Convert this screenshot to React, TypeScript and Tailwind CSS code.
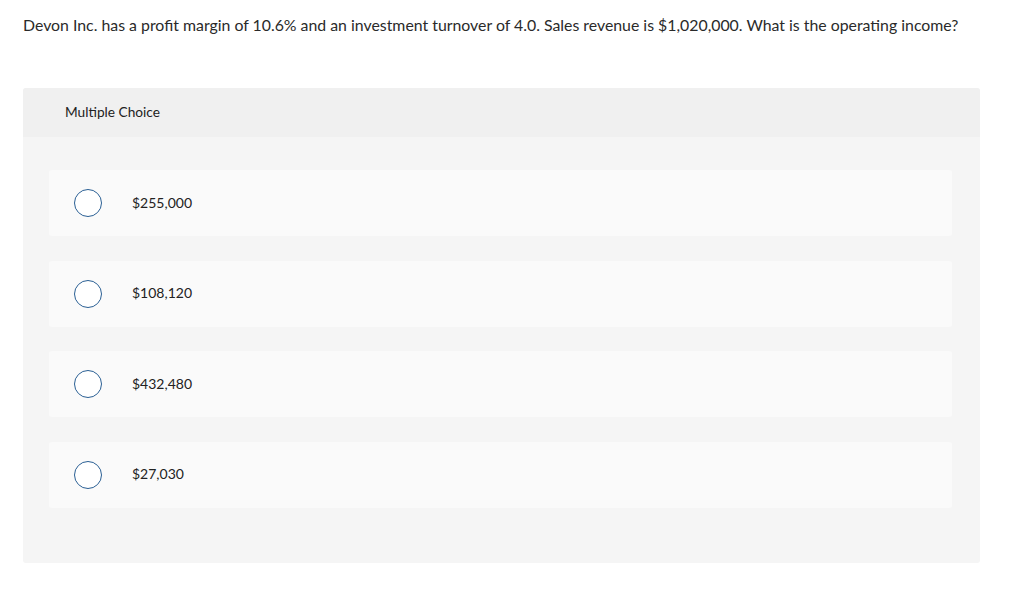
import React from "react";

const options = ["$255,000", "$108,120", "$432,480", "$27,030"];

export default function App() {
  return (
    <div className="w-[1024px] h-[592px] bg-white text-[#222]" style={{ fontFamily: "Lato, 'Open Sans', sans-serif" }}>
      <div className="pt-[14px] pl-[23px] text-[15.85px] leading-[21px] text-[#2a2a2a]">
        Devon Inc. has a profit margin of 10.6% and an investment turnover of 4.0. Sales revenue is $1,020,000. What is the operating income?
      </div>
      <div className="ml-[23px] mt-[53px] w-[957px] rounded-[3px] overflow-hidden bg-[#f5f5f5]">
        <div className="h-[49px] bg-[#f0f0f0] flex items-center pl-[42px] text-[13.7px] text-[#222]">
          Multiple Choice
        </div>
        <div className="pt-[33px] pb-[55px] pl-[26px] pr-[28px] flex flex-col gap-[24.67px]">
          {options.map((o) => (
            <div key={o} className="h-[66px] bg-[#fafafa] rounded-[3px] flex items-center">
              <div className="ml-[25px] w-[28px] h-[28px] rounded-full border border-[#2a5f94] bg-white" />
              <div className="ml-[30px] text-[14px] leading-[18px] pb-[1px] text-[#222]">{o}</div>
            </div>
          ))}
        </div>
      </div>
    </div>
  );
}
